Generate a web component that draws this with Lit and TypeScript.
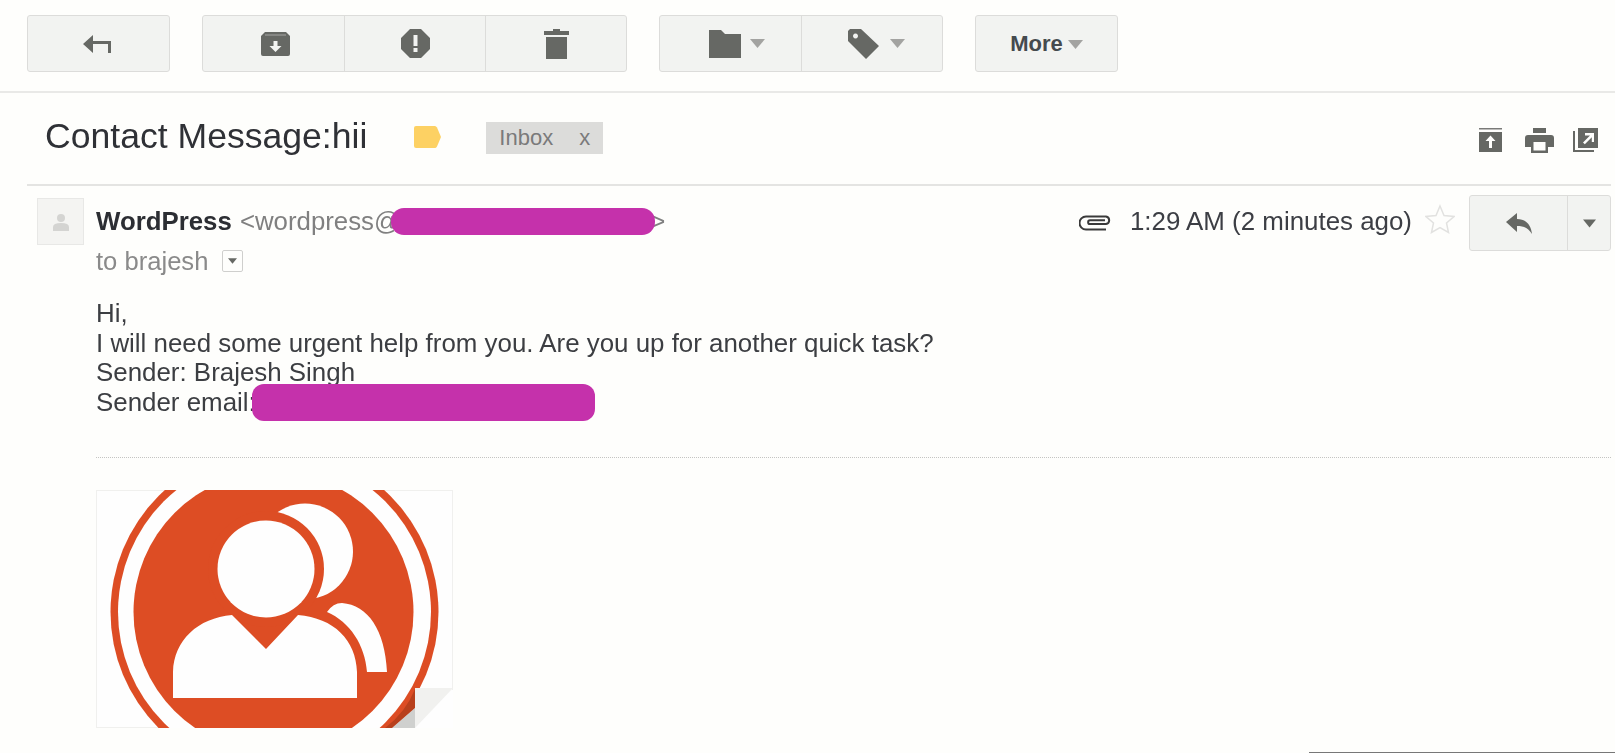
import { LitElement, html, css, svg } from "lit";
import { customElement } from "lit/decorators.js";

const caret = (w = 15, h = 9, fill = "#a3a3a1") =>
  html`<svg class="caret" width=${w} height=${h} viewBox="0 0 15 9"><path d="M0 0H15L7.5 9Z" fill=${fill}/></svg>`;

@customElement("app-root")
export class AppRoot extends LitElement {
  static styles = css`
    :host { display: block; width: 1615px; height: 753px; overflow: hidden; position: relative; background: #fefefc; font-family: "Liberation Sans", Arial, sans-serif; color: #3a3a3a; }
    .page { filter: blur(0.6px); height: 753px; display: flex; flex-direction: column; }
    .toolbar { height: 76px; padding: 15px 0 0 27px; border-bottom: 2px solid #e9e9e7; display: flex; flex-shrink: 0; }
    .group { display: grid; grid-auto-flow: column; grid-auto-columns: 1fr; height: 57px; box-sizing: border-box; border: 1px solid #dcdcda; border-radius: 3px; background: #f2f3f1; }
    .g1 { width: 143px; margin-right: 32px; }
    .g2 { width: 425px; margin-right: 32px; }
    .g3 { width: 284px; margin-right: 32px; }
    .g4 { width: 143px; }
    .btn { box-sizing: border-box; min-width: 0; display: flex; align-items: center; justify-content: center; border-left: 1px solid #dcdcda; gap: 9px; }
    .btn:first-child { border-left: 0; }
    .back { padding-right: 3px; }
    .arch { padding-left: 4px; }
    .fold { padding-left: 13px; }
    .lab { padding-left: 8px; gap: 11px; }
    .more { font-size: 22px; font-weight: 700; color: #454a4e; gap: 5px; padding-top: 1px; }
    svg { display: block; flex-shrink: 0; }
    .subject { height: 93px; box-sizing: border-box; margin: 0 4px 0 27px; border-bottom: 2px solid #e4e4e2; display: flex; align-items: center; padding: 0 13px 0 18px; flex-shrink: 0; }
    h1 { margin: 0 0 4px; font-size: 35.600px; font-weight: 400; color: #2f3136; white-space: nowrap; }
    .label { margin: 0 0 4px 47px; }
    .tag { margin: 0 0 2px 45px; width: 117px; height: 32px; box-sizing: border-box; padding: 0 13px; background: #dcdcda; color: #7a7a7a; font-size: 22px; display: flex; align-items: center; justify-content: space-between; }
    .tools { margin: 3px 0 0 auto; display: flex; gap: 19px; align-items: center; }
    .printer { margin-left: 4px; }
    .msg { display: grid; grid-template-columns: 47px 1fr; column-gap: 12px; padding: 9px 4px 0 37px; }
    .avatar { width: 47px; height: 47px; margin-top: 3px; box-sizing: border-box; border: 1px solid #e8e8e6; background: #f4f4f2; display: flex; align-items: center; justify-content: center; }
    .head { display: flex; align-items: flex-start; height: 56px; }
    .from { font-size: 25.800px; margin-top: 12px; white-space: nowrap; color: #808080; position: relative; }
    .from b { color: #2c2e33; margin-right: 1px; }
    .at { display: inline-block; width: 250px; }
    .redact { position: absolute; background: #c531ab; }
    .r1 { left: 295px; top: 1px; width: 264px; height: 27px; border-radius: 13px; }
    .meta { margin-left: auto; display: flex; align-items: center; height: 56px; }
    .time { font-size: 25.900px; color: #3c3e44; margin: 0 13px 3px 18px; white-space: nowrap; }
    .star { margin-bottom: 8px; }
    .reply { display: flex; width: 142px; height: 56px; box-sizing: border-box; border: 1px solid #dcdcda; border-radius: 3px; background: #f2f3f1; margin-left: 14px; }
    .reply .a { width: 97px; display: flex; align-items: center; justify-content: center; border-right: 1px solid #dcdcda; }
    .reply .b { flex: 1; display: flex; align-items: center; justify-content: center; }
    .to { font-size: 25.600px; color: #8a8a8a; display: flex; align-items: center; gap: 14px; height: 22px; margin-top: -1px; }
    .mini { width: 21px; height: 22px; box-sizing: border-box; border: 1px solid #cfcfcd; border-radius: 2px; display: flex; align-items: center; justify-content: center; }
    .body { grid-column: 2; font-size: 25.900px; line-height: 29.700px; color: #3c3e42; margin-top: 27px; padding-bottom: 39px; border-bottom: 1px dotted #c4c4c2; }
    .body .line { position: relative; white-space: nowrap; }
    .r2 { left: 156px; top: -4px; width: 343px; height: 37px; border-radius: 12px; }
    .pic { grid-column: 2; display: block; margin-top: 32px; }
    .edge { position: absolute; left: 1309px; right: 0; bottom: 0; height: 1px; background: #777; }
  `;

  render() {
    return html`<div class="page">
      <div class="toolbar">
        <div class="group g1"><div class="btn back">
          <svg width="28" height="18" viewBox="0 0 28 18"><path d="M0 9 10 0V6H28V18H25V9H10V18Z" fill="#666864"/></svg>
        </div></div>
        <div class="group g2">
          <div class="btn arch"><svg width="29" height="24" viewBox="0 0 29 24"><path fill="#666864" fill-rule="evenodd" d="M4 0H25L29 4V22a2 2 0 0 1-2 2H2a2 2 0 0 1-2-2V4ZM12.500 9V14H8.500L14.500 20 20.500 14H16.500V9Z"/><path d="M4 3H25" stroke="#a5a5a3" stroke-width="1"/></svg></div>
          <div class="btn"><svg width="29" height="29" viewBox="0 0 29 29"><path fill="#666864" fill-rule="evenodd" d="M9 0H20L29 9V20L20 29H9L0 20V9ZM12.500 6V17H16.500V6ZM12.500 19V23H16.500V19Z"/></svg></div>
          <div class="btn"><svg width="25" height="30" viewBox="0 0 25 30"><path fill="#666864" d="M9 0H16V2H25V6H0V2H9ZM2 8H23V30H2Z"/></svg></div>
        </div>
        <div class="group g3">
          <div class="btn fold"><svg width="32" height="28" viewBox="0 0 32 28"><path fill="#666864" d="M0 0H12L16 4H32V28H0Z"/></svg>${caret()}</div>
          <div class="btn lab"><svg width="31" height="30" viewBox="0 0 31 30"><path fill="#666864" fill-rule="evenodd" d="M2 0H13L31 17 18 30 0 12V2ZM7.500 4.500a2.500 2.500 0 1 0 .01 0Z"/></svg>${caret()}</div>
        </div>
        <div class="group g4"><div class="btn more">More${caret()}</div></div>
      </div>

      <div class="subject">
        <h1>Contact Message:hii</h1>
        <svg class="label" width="27" height="22" viewBox="0 0 27 22"><path d="M2 0H21Q22 0 23 1.500L27 11 23 20.500Q22 22 21 22H2Q0 22 0 20V2Q0 0 2 0Z" fill="#fdd163"/></svg>
        <div class="tag"><span>Inbox</span><span>x</span></div>
        <div class="tools">
          <svg width="23" height="24" viewBox="0 0 23 24"><path fill="#7a7a78" d="M0 0H23V1.500H0Z"/><path fill="#666864" fill-rule="evenodd" d="M0 4H23V24H0ZM11.500 7.500 6.500 13H10V20H13V13H16.500Z"/></svg>
          <svg class="printer" width="29" height="25" viewBox="0 0 29 25"><path fill="#666864" fill-rule="evenodd" d="M8 0H21V5H8ZM3 7H26a3 3 0 0 1 3 3V19H23V25H6V19H0V10a3 3 0 0 1 3-3ZM8.500 14V22.500H20.500V14Z"/></svg>
          <svg width="25" height="24" viewBox="0 0 25 24"><path fill="#666864" fill-rule="evenodd" d="M5 0H25V20H5ZM12 5V7.500H17L10 14.500 11.800 16.200 18.800 9.200V14H21V5ZM0 3H2V22H21V24H0Z"/></svg>
        </div>
      </div>

      <div class="msg">
        <div class="avatar"><svg width="18" height="18" viewBox="0 0 18 18"><circle cx="9" cy="5" r="4" fill="#d4d4d2"/><path d="M1 18V14Q1 10 9 10T17 14V18Z" fill="#d4d4d2"/></svg></div>
        <div>
          <div class="head">
            <div class="from"><b>WordPress</b> &lt;wordpress@<span class="at"></span>&gt;<span class="redact r1"></span></div>
            <div class="meta">
              <svg width="33" height="16" viewBox="0 0 33 16"><path fill="none" stroke="#3a3a3a" stroke-width="2" d="M27 14.500H7A6.500 6.500 0 0 1 7 1.500H27A3.800 3.800 0 0 1 27 9H11A1.800 1.800 0 0 1 11 5.300H26"/></svg>
              <span class="time">1:29 AM (2 minutes ago)</span>
              <svg class="star" width="30" height="30" viewBox="0 0 30 30"><path d="M15 2 19 11.500 29 12.500 21.500 19 23.500 28.500 15 23.500 6.500 28.500 8.500 19 1 12.500 11 11.500Z" fill="none" stroke="#e2e2e0" stroke-width="1.500"/></svg>
              <div class="reply">
                <div class="a"><svg width="26" height="21" viewBox="0 0 26 21"><path d="M0 9 11 0V6C20 6 25 12 26 21 22 15 18 13 11 13V19Z" fill="#666864"/></svg></div>
                <div class="b">${caret(13, 9, "#666864")}</div>
              </div>
            </div>
          </div>
          <div class="to">to brajesh <span class="mini">${caret(9, 6, "#666864")}</span></div>
        </div>
        <div class="body">
          <div class="line">Hi,</div>
          <div class="line">I will need some urgent help from you. Are you up for another quick task?</div>
          <div class="line">Sender: Brajesh Singh</div>
          <div class="line">Sender email:<span class="redact r2"></span></div>
        </div>
        <svg class="pic" width="357" height="238" viewBox="96 490 357 238">
          ${svg`
            <rect x="96.500" y="490.500" width="356" height="237" fill="#fefefe" stroke="#f0f0ee"/>
            <circle cx="274.500" cy="612" r="164" fill="#dd4d24"/>
            <circle cx="274.500" cy="612" r="156.500" fill="#fefefe"/>
            <circle cx="273.500" cy="612" r="140" fill="#dd4d24"/>
            <circle cx="305" cy="551.500" r="48" fill="#fefefe"/>
            <circle cx="266" cy="569" r="58" fill="#dd4d24"/>
            <circle cx="266" cy="569" r="48.500" fill="#fefefe"/>
            <path d="M327 612Q333 603 342 603C368 605 385 630 387 672H367C365 645 350 622 327 612Z" fill="#fefefe"/>
            <path d="M173 698V672C174 640 198 618 232 615L266 649 298 615C334 618 356 640 357 672V698Z" fill="#fefefe"/>
            <path d="M415 690H453V728H415Z" fill="#fefefe"/>
            <path d="M415 688H453L415 728Z" fill="#f1f1ef"/>
            <path d="M392 728 415 708V728Z" fill="#cfd0ce"/>
            <path d="M415 689Q406 712 385 728H392L415 708Z" fill="#b8401c"/>
          `}
        </svg>
      </div>
    </div>
    <div class="edge"></div>`;
  }
}
